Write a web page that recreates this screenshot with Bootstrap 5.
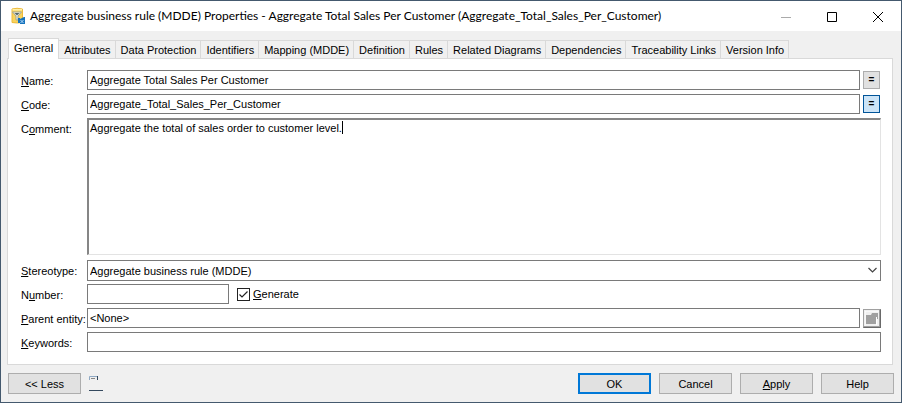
<!DOCTYPE html>
<html lang="en">
<head>
<meta charset="utf-8">
<meta name="viewport" content="width=device-width, initial-scale=1">
<title>Aggregate business rule (MDDE) Properties</title>
<link href="https://cdn.jsdelivr.net/npm/bootstrap@5.3.0/dist/css/bootstrap.min.css" rel="stylesheet">
<style>
body{font-family:"Liberation Sans",Arial,sans-serif;font-size:11px;line-height:16px;color:#000;background:#f0f0f0}
.dialog{min-height:100vh;border:1px solid #44596e;background:#f0f0f0}
.titlebar{height:30px;background:#fff;padding-left:9px}
.titlebar h1{font-family:Lato,"Open Sans",sans-serif;font-size:12px;line-height:16px;font-weight:400}
.win-btn{width:46px;height:30px;padding:0;border:0;background:none}
.tabs{padding:7px 0 0 7px}
.tabs .nav-link{padding:0 4px 0 5px;height:18px;line-height:18px;color:#000;background:#f0f0f0;border:1px solid #d9d9d9;border-left:0;border-bottom:0;border-radius:0;font-size:11px}
.tabs .nav-link.active{height:21px;padding:0 5px;margin-bottom:-1px;background:#fff;border-left:1px solid #d9d9d9;position:relative;z-index:1}
.panel{margin:0 8px 0 6px;border:1px solid #d9d9d9;background:#fff;padding:11px 11px 12px 13px}
.fields{display:grid;grid-template-columns:66px minmax(0,1fr);row-gap:4px}
.fields label.cap{line-height:16px;padding-top:3px;white-space:nowrap}
.box{display:block;width:100%;height:20px;border:1px solid #7a7a7a;border-radius:0;padding:0 2px;font-size:11px;line-height:16px;color:#000;background:#fff;outline:0}
textarea.box{height:137px;margin-bottom:1px;padding:0 1px;border-width:2px 1px 1px 2px;border-color:#868686 #e3e3e3 #e3e3e3 #868686;resize:none}
.caret{position:absolute;left:255px;top:3px;width:1px;height:13px;background:#000}
select.box{height:21px;appearance:none}
.combo{margin-bottom:-1px}
.chev{position:absolute;right:4px;top:7px;pointer-events:none}
.number{width:142px}
.tick{appearance:none;width:13px;height:13px;margin:0;border:1px solid #222;background:#fff url("data:image/svg+xml,%3Csvg xmlns='http://www.w3.org/2000/svg' viewBox='0 0 11 11'%3E%3Cpath d='M1.5 5.5l2.5 2.5 5.5-5.5' fill='none' stroke='%23222' stroke-width='1.2'/%3E%3C/svg%3E") center/11px no-repeat}
.tick+label{padding-left:3px}
.with-btn{gap:3px}
.eq{width:17px;height:18px;margin-right:1px;padding:0;border:1px solid #adadad;background:#e1e1e1;font-size:10px;line-height:14px;font-weight:700}
.eq.hot{border-color:#005499;background:#cce4f7}
.pick{width:18px;height:19px;padding:0;border:1px solid;border-color:#a0a0a0 #696969 #696969 #a0a0a0;background:#f0f0f0;line-height:0;box-shadow:inset -1px -1px #a0a0a0}
.footer{padding:8px 7px}
.cmd{width:73px;height:21px;padding:0;border:1px solid #adadad;border-radius:0;background:#e1e1e1;font-size:11px;line-height:18px;color:#000}
.cmd.main{border:2px solid #0078d7;line-height:16px}
</style>
<script src="https://cdn.jsdelivr.net/npm/bootstrap@5.3.0/dist/js/bootstrap.bundle.min.js" defer></script>
</head>
<body>
<main class="dialog d-flex flex-column">
  <header class="titlebar d-flex align-items-center">
    <svg width="16" height="18" viewBox="0 0 16 18" class="me-1 flex-shrink-0" aria-hidden="true">
      <path d="M2 2q5-1.500 10.500 0v13.500q-5 1-10.500 0z" fill="#f8d35c" stroke="#edba3a"/>
      <path d="M2.500 2h9.500v1.500H2.500z" fill="#fff0a8"/>
      <path d="M2.500 5h9L8 9v4H6V9z" fill="#f4f2e0" stroke="#a3a693"/>
      <path d="M4.500 6h5L7 8.500z" fill="#52666b"/>
      <path d="M8 11h2v5H8zM10 12l4-2h1v7h-5z" fill="#1673bd"/><path d="M10.500 13l3 3M13.500 13l-3 3" stroke="#b5d9f7"/>
    </svg>
    <h1 class="mb-0 flex-grow-1 text-nowrap">Aggregate business rule (MDDE) Properties - Aggregate Total Sales Per Customer (Aggregate_Total_Sales_Per_Customer)</h1>
    <button class="win-btn" aria-label="Minimize" disabled><svg width="10" height="10"><path d="M0 5.500h10" stroke="#aaa"/></svg></button>
    <button class="win-btn" aria-label="Maximize"><svg width="10" height="10"><path d="M.5.5h9v9h-9z" fill="none" stroke="#000"/></svg></button>
    <button class="win-btn" aria-label="Close"><svg width="10" height="10"><path d="M0 0l10 10M10 0L0 10" stroke="#000"/></svg></button>
  </header>
  <nav class="tabs nav flex-nowrap align-items-end text-nowrap" aria-label="Pages">
    <a class="nav-link active" href="#">General</a><a class="nav-link" href="#">Attributes</a><a class="nav-link" href="#">Data Protection</a><a class="nav-link" href="#">Identifiers</a><a class="nav-link" href="#">Mapping (MDDE)</a><a class="nav-link" href="#">Definition</a><a class="nav-link" href="#">Rules</a><a class="nav-link" href="#">Related Diagrams</a><a class="nav-link" href="#">Dependencies</a><a class="nav-link" href="#">Traceability Links</a><a class="nav-link" href="#">Version Info</a>
  </nav>
  <section class="panel">
    <form class="fields">
      <label class="cap" for="name"><u>N</u>ame:</label>
      <div class="with-btn d-flex align-items-center"><input id="name" class="box" value="Aggregate Total Sales Per Customer"><button type="button" class="eq flex-shrink-0" aria-label="Name equals">=</button></div>
      <label class="cap" for="code"><u>C</u>ode:</label>
      <div class="with-btn d-flex align-items-center"><input id="code" class="box" value="Aggregate_Total_Sales_Per_Customer"><button type="button" class="eq hot flex-shrink-0" aria-label="Code equals">=</button></div>
      <label class="cap" for="comment">C<u>o</u>mment:</label>
      <div class="position-relative"><textarea id="comment" class="box">Aggregate the total of sales order to customer level.</textarea><span class="caret"></span></div>
      <label class="cap" for="stereo"><u>S</u>tereotype:</label>
      <div class="combo position-relative"><select id="stereo" class="box"><option>Aggregate business rule (MDDE)</option></select><svg class="chev" width="9" height="7"><path d="M.5 1l4 4 4-4" fill="none" stroke="#444" stroke-width="1.200"/></svg></div>
      <label class="cap" for="number">N<u>u</u>mber:</label>
      <div class="d-flex align-items-center gap-2"><input id="number" class="box number"><span class="d-flex align-items-center"><input type="checkbox" class="tick" id="gen" checked><label for="gen"><u>G</u>enerate</label></span></div>
      <label class="cap" for="parent"><u>P</u>arent entity:</label>
      <div class="d-flex align-items-center with-btn"><input id="parent" class="box" value="&lt;None&gt;"><button type="button" class="pick flex-shrink-0" aria-label="Parent entity properties"><svg width="14" height="15"><path d="M0 15V0h14" fill="none" stroke="#fff"/><path d="M1 4h5l1-2h6v6h-1V6h-1v7H1z" fill="#a0a0a0"/><path d="M11.500 6v8" stroke="#fff"/></svg></button></div>
      <label class="cap" for="keys"><u>K</u>eywords:</label>
      <input id="keys" class="box">
    </form>
  </section>
  <footer class="footer d-flex align-items-center">
    <button class="cmd">&lt;&lt; Less</button>
    <svg class="ms-2" width="14" height="17" aria-hidden="true"><path d="M.5 5V1.500H8" fill="none" stroke="#8fa9c4"/><path d="M8.500 1v4" stroke="#34495e"/><path d="M2 3.500h4" stroke="#888"/><path d="M0 15.500h14" stroke="#34495e"/></svg>
    <div class="d-flex gap-2 ms-auto"><button class="cmd main">OK</button><button class="cmd">Cancel</button><button class="cmd"><u>A</u>pply</button><button class="cmd">Help</button></div>
  </footer>
</main>
</body>
</html>
